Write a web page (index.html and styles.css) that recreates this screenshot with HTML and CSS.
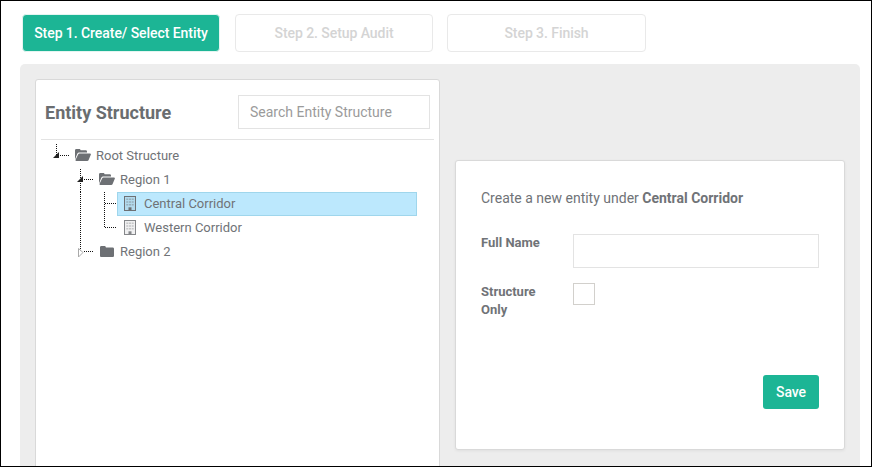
FILE: index.html
```html
<!DOCTYPE html>
<html lang="en">
<head>
<meta charset="UTF-8">
<title>Create Audit</title>
<link rel="stylesheet" href="styles.css">
</head>
<body>
<svg class="defs" width="0" height="0">
    <symbol id="folder-open" viewBox="0 0 16 12">
        <path d="M0 10.600V1.400C0 .6.600 0 1.300 0h3c.8 0 1.300.6 1.300 1.300h5.200c.7 0 1.200.6 1.200 1.300v1H4.300C3.300 3.600 2.600 4.200 2.200 5L0 10.600zM4.500 4.500H15c.7 0 1.100.6.800 1.200l-2.300 5.500c-.2.500-.7.800-1.200.8H1.300c-.6 0-1-.6-.8-1.100L3.100 5.400c.3-.6.800-.9 1.400-.9z"/>
    </symbol>
    <symbol id="folder" viewBox="0 0 14 11">
        <path d="M1.300 0h3.300c.7 0 1.200.6 1.300 1.400h6.800c.7 0 1.300.6 1.300 1.300v7c0 .7-.6 1.300-1.300 1.300H1.300C.6 11 0 10.400 0 9.700V1.300C0 .6.600 0 1.300 0z"/>
    </symbol>
    <symbol id="building" viewBox="0 0 12 15">
        <path fill-rule="evenodd" d="M0 0h12v15H0zM1 1v13h10V1z"/>
        <path d="M1 1h10v13H1z" opacity=".12"/>
        <path d="M2.300 2.500h2v1.500h-2zM5 2.500h2v1.500H5zM7.700 2.500h2v1.500h-2zM2.300 5.200h2v1.500h-2zM5 5.200h2v1.500H5zM7.700 5.200h2v1.500h-2zM2.300 7.900h2v1.500h-2zM5 7.900h2v1.500H5zM7.700 7.900h2v1.500h-2z" opacity=".4"/>
        <path d="M4.500 11.300h3V14h-3z"/>
    </symbol>
</svg>

<div class="frame">
    <div class="steps">
        <div class="step active">Step 1. Create/ Select Entity</div>
        <div class="step">Step 2. Setup Audit</div>
        <div class="step last">Step 3. Finish</div>
    </div>

    <div class="panel">
        <div class="card tree-card">
            <div class="tree-head">
                <h2>Entity Structure</h2>
                <input class="search" type="text" placeholder="Search Entity Structure">
            </div>
            <div class="tree">
                <div class="row">
                    <svg class="cell" viewBox="0 0 24 24"><path class="dots" d="M11.500 0V11M15 11.500H24"/><path class="open" d="M8 14L14 8V14z"/></svg>
                    <svg class="ico folder-open"><use href="#folder-open"/></svg>
                    <span class="name">Root Structure</span>
                </div>
                <div class="row">
                    <span class="blank"></span>
                    <svg class="cell" viewBox="0 0 24 24"><path class="dots" d="M11.500 1V24M15 11.500H24"/><path class="open" d="M8 14L14 8V14z"/></svg>
                    <svg class="ico folder-open"><use href="#folder-open"/></svg>
                    <span class="name">Region 1</span>
                </div>
                <div class="row">
                    <span class="blank"></span>
                    <svg class="cell" viewBox="0 0 24 24"><path class="dots" d="M11.500 0V24"/></svg>
                    <svg class="cell" viewBox="0 0 24 24"><path class="dots" d="M11.500 0V24M12 11.500H24"/></svg>
                    <div class="leaf selected">
                        <svg class="ico building"><use href="#building"/></svg>
                        <span class="name">Central Corridor</span>
                    </div>
                </div>
                <div class="row">
                    <span class="blank"></span>
                    <svg class="cell" viewBox="0 0 24 24"><path class="dots" d="M11.500 0V24"/></svg>
                    <svg class="cell" viewBox="0 0 24 24"><path class="dots" d="M11.500 0V11.500H24"/></svg>
                    <div class="leaf">
                        <svg class="ico building faded"><use href="#building"/></svg>
                        <span class="name">Western Corridor</span>
                    </div>
                </div>
                <div class="row">
                    <span class="blank"></span>
                    <svg class="cell" viewBox="0 0 24 24"><path class="dots" d="M11.500 0V12M15 11.500H24"/><path class="closed" d="M9.500 8.500L14 12.500L9.500 17z"/></svg>
                    <svg class="ico folder"><use href="#folder"/></svg>
                    <span class="name">Region 2</span>
                </div>
            </div>
        </div>

        <div class="card form-card">
            <p class="intro">Create a new entity under <b>Central Corridor</b></p>
            <div class="field">
                <label for="fullName">Full Name</label>
                <input id="fullName" class="text-input" type="text">
            </div>
            <div class="field">
                <label for="structureOnly">Structure Only</label>
                <input id="structureOnly" class="check" type="checkbox">
            </div>
            <div class="actions">
                <button class="save">Save</button>
            </div>
        </div>
    </div>
</div>
</body>
</html>
```

FILE: styles.css
```css
html, body {
    margin: 0;
    padding: 0;
    background-color: #fff;
}

body {
    font-family: Roboto, "Liberation Sans", sans-serif;
    font-size: 14px;
    color: #707377;
}

.defs {
    display: block;
    height: 0;
}

.frame {
    box-sizing: border-box;
    width: 872px;
    height: 467px;
    border: 1px solid #000;
    overflow: hidden;
    padding: 13px 11px 0 19px;
}

/* steps */
.steps {
    display: flex;
    gap: 15px;
    padding-left: 2px;
    margin-bottom: 12px;
}

.step {
    box-sizing: border-box;
    width: 198px;
    height: 38px;
    line-height: 36px;
    text-align: center;
    font-weight: 500;
    letter-spacing: -0.06px;
    color: #d4d4d4;
    border: 1px solid #e9e9e9;
    border-radius: 4px;
}

.step.active {
    color: #fff;
    background-color: #1cb595;
    border-color: #e4f5f1;
}

.step.last {
    width: 199px;
    margin-left: -1px;
}

/* grey panel */
.panel {
    display: flex;
    align-items: flex-start;
    gap: 15px;
    height: 420px;
    padding: 15px;
    box-sizing: border-box;
    background-color: #ededed;
    border-radius: 5px 5px 0 0;
}

.card {
    box-sizing: border-box;
    background-color: #fff;
    border: 1px solid #d9d9d9;
    border-radius: 3px;
}

/* left card */
.tree-card {
    width: 405px;
    height: 430px;
    padding: 15px 5px 0;
}

.tree-head {
    display: flex;
    align-items: center;
    justify-content: space-between;
    padding: 0 4px 10px 4px;
    border-bottom: 1px solid #e3e3e3;
}

.tree-head h2 {
    margin: 0;
    font-size: 18px;
    font-weight: 700;
    color: #6a6d70;
}

.search {
    box-sizing: border-box;
    width: 192px;
    height: 34px;
    padding: 0 11px;
    font-family: inherit;
    font-size: 14px;
    border: 1px solid #e3e3e3;
    outline: none;
}

.search::placeholder {
    color: #9b9b9b;
    opacity: 1;
}

.tree {
    padding: 4px 0 0 4px;
    font-size: 13px;
}

.row {
    display: flex;
    align-items: center;
    height: 24px;
}

.blank {
    width: 24px;
    height: 24px;
    flex: none;
}

.cell {
    width: 24px;
    height: 24px;
    flex: none;
}

.dots {
    fill: none;
    stroke: #111;
    stroke-width: 1;
    stroke-dasharray: 1 1;
}

.open {
    fill: #222;
}

.closed {
    fill: #fff;
    stroke: #aaa;
    stroke-width: 1;
}

.name {
    margin-bottom: 2px;
}

.ico {
    flex: none;
    fill: #6d7074;
    margin-bottom: 2px;
}

.ico.folder-open {
    width: 16px;
    height: 12px;
    margin-left: 6px;
    margin-right: 5px;
}

.ico.folder {
    width: 14px;
    height: 11px;
    margin-left: 7px;
    margin-right: 6px;
}

.ico.building {
    width: 12px;
    height: 15px;
    margin-right: 8px;
}

.ico.faded {
    fill: #85878a;
}

.leaf {
    box-sizing: border-box;
    display: flex;
    align-items: center;
    width: 300px;
    height: 24px;
    padding-left: 6px;
    border: 1px solid transparent;
}

.leaf.selected {
    background-color: #bce8fd;
    border-color: #9fd6ec;
}

/* right card */
.form-card {
    width: 390px;
    height: 290px;
    margin-top: 81px;
    padding: 29px 25px 0;
    box-shadow: 0 1px 3px rgba(0, 0, 0, 0.06);
}

.intro {
    margin: 0 0 27px;
    line-height: 17px;
}

.intro b {
    font-weight: 700;
}

.field {
    display: flex;
    align-items: flex-start;
    margin-bottom: 15px;
}

.field label {
    width: 92px;
    flex: none;
    font-size: 13px;
    font-weight: 700;
    line-height: 18px;
    padding-right: 30px;
    box-sizing: border-box;
}

.text-input {
    box-sizing: border-box;
    width: 246px;
    height: 34px;
    margin: 0;
    border: 1px solid #e3e3e3;
    outline: none;
}

.check {
    appearance: none;
    box-sizing: border-box;
    width: 22px;
    height: 22px;
    margin: 0;
    background-color: #fff;
    border: 1px solid #d2d0cc;
}

.actions {
    display: flex;
    justify-content: flex-end;
    margin-top: 56px;
}

.save {
    width: 56px;
    height: 34px;
    font-family: inherit;
    font-size: 14px;
    font-weight: 500;
    letter-spacing: -0.06px;
    color: #fff;
    background-color: #1cb595;
    border: none;
    border-radius: 3px;
}
```
